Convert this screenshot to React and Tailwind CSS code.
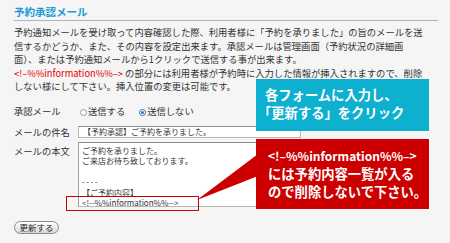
export default function App() {
  return (
    <div className="relative w-[450px] h-[243px] overflow-hidden bg-[#f5f5f5] text-[#333] [font-family:'Noto_Sans_CJK_JP','Noto_Sans',sans-serif]">
      <div className="ml-[14px] w-[424px]">
        {/* TITLE */}
        <div className="pt-[5px] pb-[1px] border-b border-[#b4b4b4] text-[10.5px] leading-[14px] font-bold text-[#1a9bd7]">
          予約承認メール
        </div>

        {/* DESCRIPTION */}
        <p className="mt-[5px] text-[9.3px] leading-[13.5px] whitespace-nowrap">
          予約通知メールを受け取って内容確認した際、利用者様に「予約を承りました」の旨のメールを送
          <br />
          信するかどうか、また、その内容を設定出来ます。承認メールは管理画面（予約状況の詳細画
          <br />
          面）、または予約通知メールから1クリックで送信する事が出来ます。
          <br />
          <span className="text-[#e60000]">&lt;!–%%information%%–&gt;</span> の部分には利用者様が予約時に入力した情報が挿入されますので、削除
          <br />
          しない様にして下さい。挿入位置の変更は可能です。
        </p>

        {/* FORM */}
        <div className="mt-[11.5px] flex items-center h-[14px] text-[9.3px]">
          <span className="w-[64px]">承認メール</span>
          <span className="ml-[2px] w-[7px] h-[7px] rounded-full border border-[#9a9a9a] bg-white" />
          <span className="ml-[1px]">送信する</span>
          <span className="ml-[14px] w-[7px] h-[7px] rounded-full border border-[#2f6fb8] bg-white flex items-center justify-center">
            <span className="w-[3px] h-[3px] rounded-full bg-[#2f6fb8]" />
          </span>
          <span className="ml-[1px]">送信しない</span>
        </div>

        <div className="mt-[7px] flex items-center text-[9.3px]">
          <span className="w-[64px] leading-[12px]">メールの件名</span>
          <div className="w-[223px] h-[12px] bg-white border border-[#b8b8b8] border-t-[#8c8c8c] pl-[4px] text-[8px] leading-[10px] whitespace-nowrap">
            【予約承認】ご予約を承りました。
          </div>
        </div>

        <div className="mt-[4px] flex items-start text-[9.3px]">
          <span className="w-[64px] pt-[2px] leading-[14px]">メールの本文</span>
          <div className="w-[223px] h-[65px] bg-white border border-[#b8b8b8] border-t-[#8c8c8c] border-l-[#9c9c9c] pl-[3px] pt-[3px] text-[8px] leading-[10.4px] whitespace-nowrap">
            ご予約を承りました。
            <br />
            ご来店お待ち致しております。
            <br />
            <br />
            <span className="tracking-[1.5px]">----</span>
            <br />
            【ご予約内容】
            <br />
            &lt;!--%%information%%--&gt;
          </div>
        </div>

        <button className="mt-[14px] block w-[45px] h-[13px] rounded-full border border-[#8a8a8a] bg-gradient-to-b from-white to-[#d8d8d8] text-[8.5px] leading-[11px] text-[#222]">
          更新する
        </button>
      </div>

      {/* highlight */}
      <div className="absolute left-[66px] top-[196px] w-[133px] h-[15px] border border-[#cc0000]" />

      {/* pointer */}
      <svg className="absolute left-0 top-0" width="450" height="243">
        <polygon points="197,200 258,154 258,176" fill="#cc0000" />
      </svg>

      {/* blue note */}
      <div className="absolute left-[256px] top-[79px] w-[173px] h-[52px] bg-[#0db0cf] pl-[2px] pt-[7px] text-white text-[13.3px] leading-[18px] font-semibold whitespace-nowrap">
        <div className="pl-[7px]">各フォームに入力し、</div>
        <div>「更新する」をクリック</div>
      </div>

      {/* red note */}
      <div className="absolute left-[256px] top-[139px] w-[173px] h-[70px] bg-[#cc0000] pl-[12px] pt-[8px] text-white text-[13.3px] leading-[18px] font-semibold whitespace-nowrap">
        <div className="text-[12px]">&lt;!–%%information%%–&gt;</div>
        <div>には予約内容一覧が入る</div>
        <div>ので削除しないで下さい。</div>
      </div>
    </div>
  );
}
